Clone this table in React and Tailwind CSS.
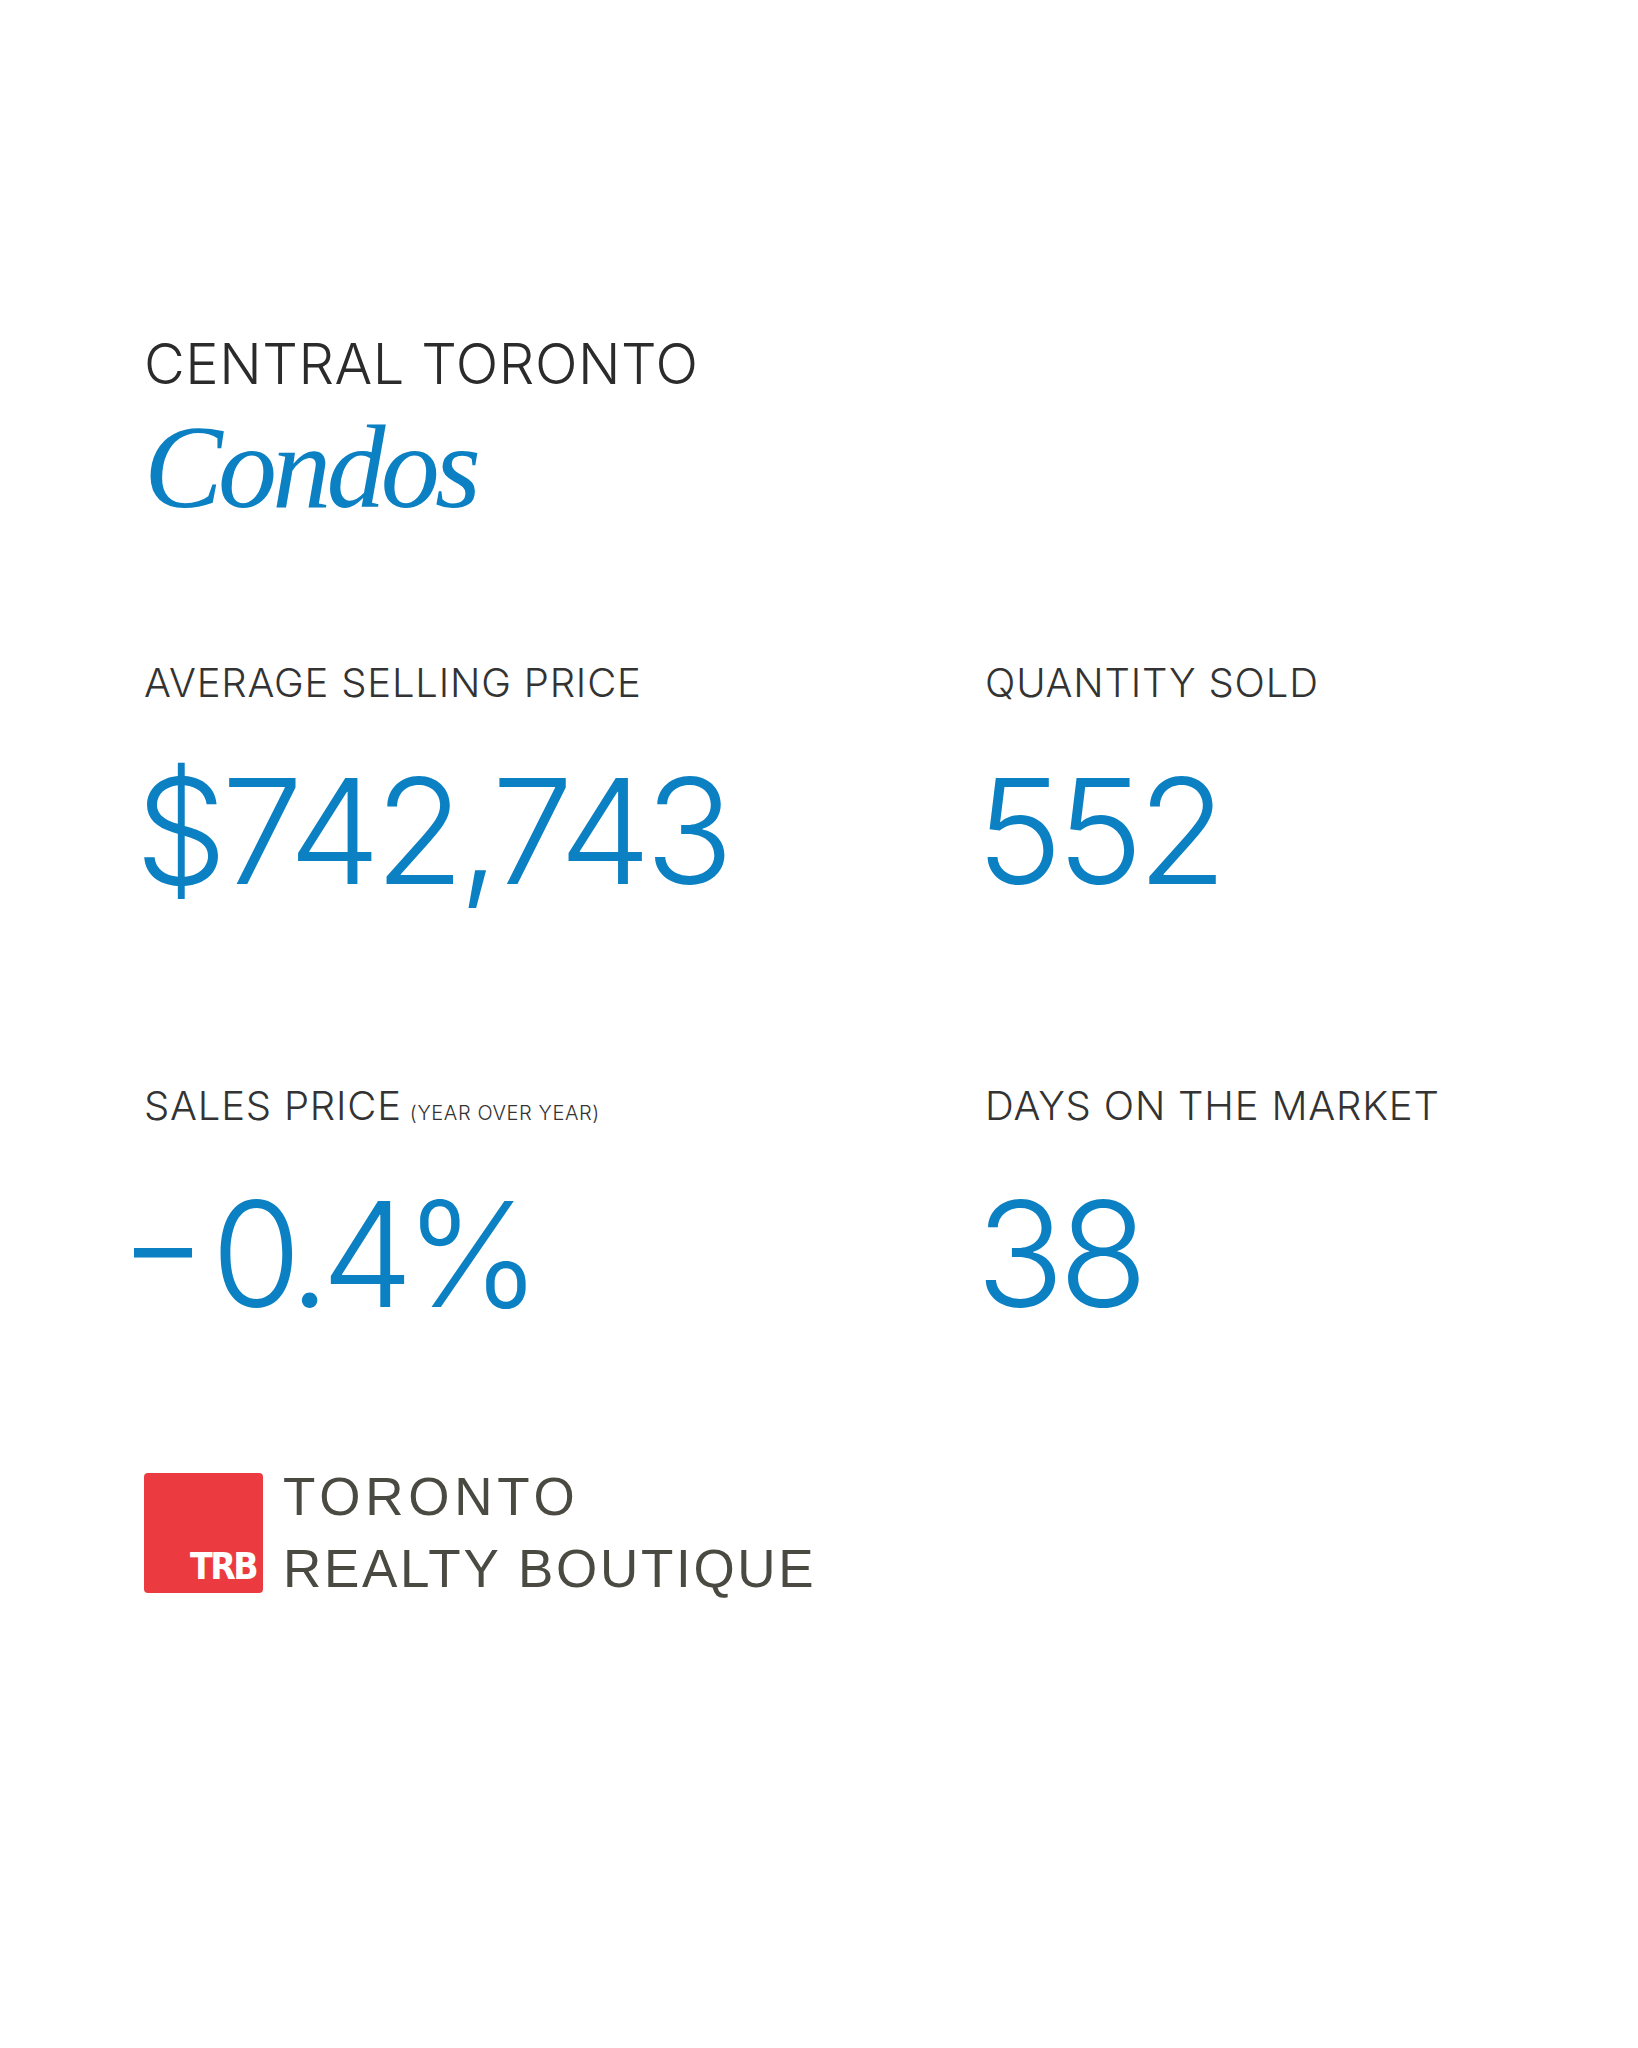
const stats = [
  { label: 'AVERAGE SELLING PRICE', value: '$742,743' },
  { label: 'QUANTITY SOLD', value: '552' },
  { label: 'SALES PRICE', note: '(YEAR OVER YEAR)', value: '0.4%', negative: true },
  { label: 'DAYS ON THE MARKET', value: '38' },
];

const Stat = ({ label, note, value, negative }) => (
  <div>
    <div className="font-['Inter',sans-serif] font-light text-[40px] leading-none tracking-[0.02em] text-[#333333] whitespace-nowrap">
      {label}
      {note && <span className="ml-2 text-[20px] tracking-[0.03em]">{note}</span>}
    </div>
    <div
      className={
        "mt-[55px] font-['Inter',sans-serif] font-light text-[146px] leading-none text-[#0b80c3] whitespace-nowrap " +
        (negative ? 'ml-[-10px] tracking-[-0.06em]' : 'ml-[-9px] tracking-[-0.04em]')
      }
    >
      {negative && <span className="mr-[28px] text-[116px] font-normal align-[18px]">–</span>}
      {value}
    </div>
  </div>
);

const Logo = () => (
  <div className="flex items-center gap-5">
    <div className="w-[119px] h-[120px] rounded-[4px] bg-[#ec3b40] flex items-end justify-end px-[7px] pb-[8px]">
      <span className="font-['DejaVu_Sans_Condensed','DejaVu_Sans',sans-serif] font-bold text-[37px] leading-none tracking-[-0.07em] text-white">
        TRB
      </span>
    </div>
    <div className="font-['Liberation_Sans',sans-serif] text-[53px] leading-[72px] text-[#4a4a42]">
      <div className="tracking-[0.09em]">TORONTO</div>
      <div className="tracking-[0.051em]">REALTY BOUTIQUE</div>
    </div>
  </div>
);

export default function App() {
  return (
    <div className="w-[1638px] h-[2048px] bg-white pl-[144px] pt-[336px]">
      <div className="font-['Inter',sans-serif] font-light text-[56px] leading-none tracking-[0.01em] text-[#2b2b2b]">
        CENTRAL TORONTO
      </div>
      <div className="mt-[17px] font-['Liberation_Serif',serif] italic text-[118px] leading-none tracking-[-0.04em] text-[#0b80c3]">
        Condos
      </div>

      <div className="mt-[136px] grid grid-cols-[841px_1fr] gap-y-[182px]">
        {stats.map((s) => (
          <Stat key={s.label} {...s} />
        ))}
      </div>

      <div className="mt-[134px]">
        <Logo />
      </div>
    </div>
  );
}
